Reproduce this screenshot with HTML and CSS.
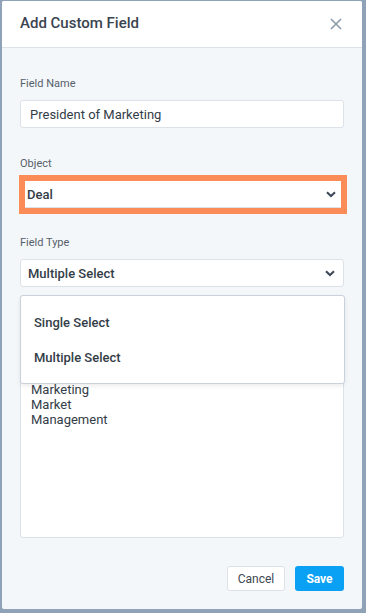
FILE: index.html
```html
<!DOCTYPE html>
<html lang="en">
<head>
    <meta charset="UTF-8">
    <meta name="viewport" content="width=device-width, initial-scale=1.0">
    <title>Add Custom Field</title>
    <link rel="stylesheet" href="styles.css">
</head>
<body>

<div class="modal">
    <div class="modal-header">
        <div class="modal-title">Add Custom Field</div>
        <svg class="close" width="12" height="12" viewBox="0 0 12 12">
            <path d="M1 1L11 11M11 1L1 11" stroke="currentColor" stroke-width="1.6" fill="none"/>
        </svg>
    </div>

    <div class="modal-body">
        <div class="field">
            <div class="label">Field Name</div>
            <div class="input">President of Marketing</div>
        </div>

        <div class="field">
            <div class="label">Object</div>
            <div class="highlight">
                <div class="select select-bold">
                    <span>Deal</span>
                    <svg class="chevron" width="10" height="7" viewBox="0 0 10 7">
                        <path d="M1 1.2L5 5L9 1.2" stroke="currentColor" stroke-width="2" fill="none"/>
                    </svg>
                </div>
            </div>
        </div>

        <div class="field">
            <div class="label">Field Type</div>
            <div class="select select-bold">
                <span>Multiple Select</span>
                <svg class="chevron" width="10" height="7" viewBox="0 0 10 7">
                    <path d="M1 1.2L5 5L9 1.2" stroke="currentColor" stroke-width="2" fill="none"/>
                </svg>
            </div>
            <div class="options-wrap">
                <div class="textarea">
                    <div>Marketing</div>
                    <div>Market</div>
                    <div>Management</div>
                </div>
                <div class="menu">
                    <div class="menu-item">Single Select</div>
                    <div class="menu-item">Multiple Select</div>
                </div>
            </div>
        </div>

        <div class="footer">
            <button class="btn btn-cancel">Cancel</button>
            <button class="btn btn-save">Save</button>
        </div>
    </div>
</div>

</body>
</html>
```

FILE: styles.css
```css
body {
    margin: 0;
    background-color: #8fa2b7;
    font-family: Roboto, "Liberation Sans", Arial, sans-serif;
    color: #333d48;
}
.modal {
    width: 360px;
    height: 608px;
    margin: 1px 0 0 2px;
    background-color: #f4f7fa;
    border-radius: 2px;
    overflow: hidden;
}
.modal-header {
    height: 46px;
    background-color: #fff;
    border-bottom: 1px solid #dde2e8;
    display: flex;
    align-items: center;
    justify-content: space-between;
    padding: 0 20px 0 18px;
}
.modal-title {
    font-size: 15px;
    font-weight: 500;
    color: #3a4450;
    margin-top: -3px;
}
.close {
    color: #8c9aa9;
    margin-right: 0;
}
.modal-body {
    padding: 29px 18px 0 18px;
}
.field {
    margin-bottom: 29px;
}
.label {
    font-size: 11px;
    line-height: 14px;
    color: #56606b;
    margin-bottom: 9px;
}
.input, .select {
    height: 28px;
    box-sizing: border-box;
    background-color: #fff;
    border: 1px solid #dde2e8;
    border-radius: 3px;
    font-size: 13px;
    display: flex;
    align-items: center;
    padding: 0 9px;
}
.select {
    justify-content: space-between;
    padding: 0 8px 0 7px;
}
.select-bold span {
    font-weight: 500;
}
.chevron {
    color: #3d4856;
}
.highlight {
    border: 6px solid #fb8c57;
    margin: 0 -3px 0 -1px;
    margin-top: 4px;
}
.highlight .select {
    height: 27px;
    border: none;
    border-bottom: 1px solid #dde2e8;
    border-radius: 0;
    padding: 0 5px 0 2px;
}
.field:nth-child(2) .label {
    margin-bottom: 0;
}
.field:nth-child(2) {
    margin-bottom: 22px;
}
.options-wrap {
    position: relative;
    margin-top: 8px;
}
.textarea {
    height: 243px;
    box-sizing: border-box;
    background-color: #fff;
    border: 1px solid #dde2e8;
    border-radius: 3px;
    padding: 86px 10px 0 10px;
    font-size: 13px;
    line-height: 15px;
}
.menu {
    position: absolute;
    top: 0;
    left: 0;
    right: -1px;
    height: 89px;
    box-sizing: border-box;
    background-color: #fff;
    border: 1px solid #c9d1db;
    border-radius: 3px;
    box-shadow: 0 2px 4px rgba(0, 0, 0, 0.08);
    padding-top: 18px;
}
.menu-item {
    font-size: 13px;
    font-weight: 500;
    line-height: 17px;
    padding: 0 13px;
    margin-bottom: 18px;
}
.footer {
    display: flex;
    justify-content: flex-end;
    gap: 10px;
    margin-top: -1px;
}
.btn {
    height: 25px;
    border-radius: 3px;
    font-family: Roboto, "Liberation Sans", Arial, sans-serif;
    font-size: 12px;
    padding: 0;
    cursor: pointer;
}
.btn-cancel {
    width: 58px;
    background-color: #fff;
    border: 1px solid #dde2e8;
    color: #3d4750;
}
.btn-save {
    width: 49px;
    background-color: #0aa1f5;
    border: none;
    color: #fff;
    font-weight: 700;
}
```
